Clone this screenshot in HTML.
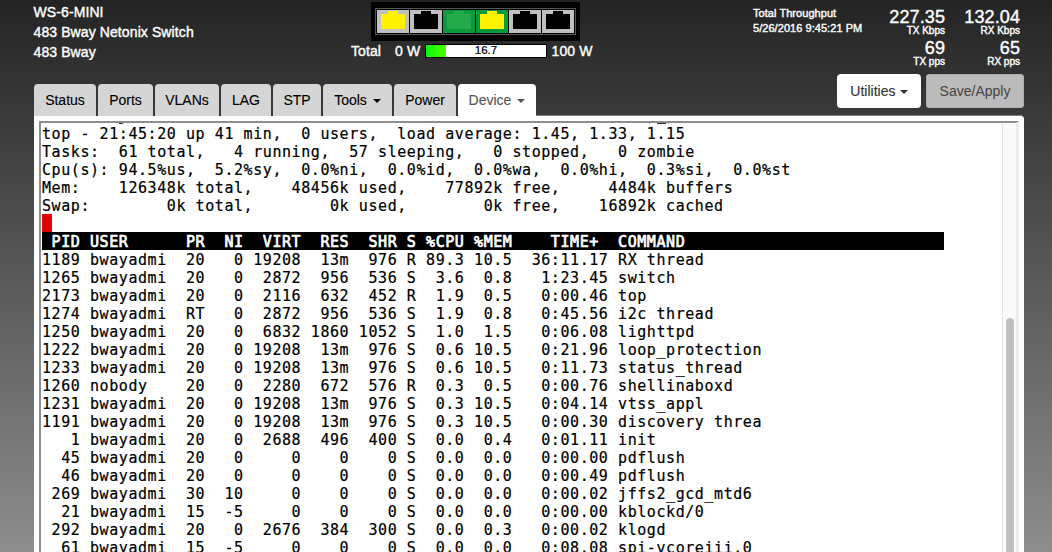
<!DOCTYPE html>
<html><head><meta charset="utf-8"><title>WS-6-MINI</title>
<style>
*{box-sizing:border-box}
html,body{margin:0;padding:0}
body{width:1052px;height:552px;overflow:hidden;position:relative;
 font-family:"Liberation Sans",Arial,Helvetica,sans-serif;font-size:14px;line-height:20px;color:#fff;
 background:linear-gradient(to bottom,#242424 0px,#8d8d8d 552px);}
.abs{position:absolute;white-space:nowrap}
.w{color:#fff;-webkit-text-stroke:0.4px #fff;letter-spacing:0.1px}
#info{left:33.5px;top:2px}
#portbox{left:371px;top:2px;width:209px;height:39px;background:#000}
#portinner{position:absolute;left:4px;top:6px;width:201px;height:27px;border:1px solid #555}
#portinner svg{position:absolute;left:1px;top:1px}
#pbar{left:425px;top:44px;width:122px;height:14px;background:#fff;border:1px solid #000;}
#pfill{position:absolute;left:0;top:0;height:12px;width:20px;background:linear-gradient(to right,#06f906,#4eff00)}
#ptext{position:absolute;left:0;top:-2px;width:120px;text-align:center;font-size:11.6px;line-height:13px;color:#000;-webkit-text-stroke:0.2px #000}
.sm{font-size:11px;line-height:15px;letter-spacing:0.05px}
.num{font-size:18px;line-height:20px;text-align:right}
.lab{font-size:10px;line-height:11px;text-align:right;letter-spacing:0}
.tab{position:absolute;top:84px;height:32px;background:#d5d5d5;border-radius:4px 4px 0 0;color:#000;-webkit-text-stroke:0.12px;
  text-align:center;line-height:32px;font-size:14px;white-space:nowrap}
.tab.act{background:#fff;color:#555;height:33px}
.caret{display:inline-block;width:0;height:0;margin-left:6px;vertical-align:middle;position:relative;top:0px;border-top:4px solid;border-right:4px solid transparent;border-left:4px solid transparent}
.btn{position:absolute;top:74px;height:34px;border-radius:4px;font-size:14px;line-height:35px;text-align:center;white-space:nowrap}
#panel{left:34px;top:116px;width:990px;height:460px;background:#fff;border-radius:0 3px 0 0}
#pline{left:536px;top:115px;width:486px;height:1px;background:rgba(255,255,255,0.35)}
#term{position:absolute;left:5px;top:5px;width:980px;height:460px;border:2px solid;border-right-width:3px;border-color:#8e8e8e #ececec #ececec #8e8e8e;background:#fff;overflow:hidden}
#tx{position:absolute;left:1px;top:1px;color:#000;font-family:"DejaVu Sans Mono","Liberation Mono",monospace;font-size:15px;letter-spacing:0.57px;line-height:18px;-webkit-text-stroke:0.2px #000}
.r{height:18px;white-space:pre;padding-top:1px}
.r.h{background:#000;color:#fff;-webkit-text-stroke:0.7px #fff;width:902.4px;overflow:hidden}
.cur{display:inline-block;background:#e00000;height:18px;vertical-align:top;margin-top:-1px}
i.m{position:absolute;top:0;height:1px;background:#333}
#sb{position:absolute;right:0;top:0;width:14px;height:100%;background:#fafafa;border-left:1px solid #e4e4e4}
#thumb{position:absolute;left:3px;top:195px;width:8px;height:300px;border-radius:4px;background:#c1c1c1}
</style></head><body>
<div id="info" class="abs w">WS-6-MINI<br>483 Bway Netonix Switch<br>483 Bway</div>

<div id="portbox" class="abs"><div id="portinner"><svg width="198" height="23" viewBox="0 0 198 23"><g transform="translate(0,0)"><rect width="32" height="23" fill="#c0c0c0"/><path d="M4 4h7v-3h10v3h7v15h-24z" fill="#fff200"/></g><g transform="translate(33,0)"><rect width="32" height="23" fill="#c0c0c0"/><path d="M4 4h7v-3h10v3h7v15h-24z" fill="#000"/></g><g transform="translate(66,0)"><rect width="32" height="23" fill="#0a9a3c"/><path d="M4 4h7v-3h10v3h7v15h-24z" fill="#23ab4b"/></g><g transform="translate(99,0)"><rect width="32" height="23" fill="#0a9a3c"/><path d="M4 4h7v-3h10v3h7v15h-24z" fill="#fff200"/></g><g transform="translate(132,0)"><rect width="32" height="23" fill="#c0c0c0"/><path d="M4 4h7v-3h10v3h7v15h-24z" fill="#000"/></g><g transform="translate(165,0)"><rect width="32" height="23" fill="#c0c0c0"/><path d="M4 4h7v-3h10v3h7v15h-24z" fill="#000"/></g></svg></div></div>
<div class="abs w" style="left:351px;top:41px">Total</div>
<div class="abs w" style="left:395px;top:41px">0 W</div>
<div id="pbar" class="abs"><div id="pfill"></div><div id="ptext">16.7</div></div>
<div class="abs w" style="left:551.5px;top:41px">100 W</div>

<div class="abs w sm" style="left:753px;top:6px">Total Throughput<br>5/26/2016 9:45:21 PM</div>
<div class="abs w num" style="right:107px;top:7px">227.35</div>
<div class="abs w lab" style="right:107px;top:25px">TX Kbps</div>
<div class="abs w num" style="right:107px;top:38px">69</div>
<div class="abs w lab" style="right:107px;top:56px">TX pps</div>
<div class="abs w num" style="right:32px;top:7px">132.04</div>
<div class="abs w lab" style="right:32px;top:25px">RX Kbps</div>
<div class="abs w num" style="right:32px;top:38px">65</div>
<div class="abs w lab" style="right:32px;top:56px">RX pps</div>

<div class="tab" style="left:34px;width:62px">Status</div>
<div class="tab" style="left:98px;width:55px">Ports</div>
<div class="tab" style="left:155px;width:64px">VLANs</div>
<div class="tab" style="left:221px;width:50px">LAG</div>
<div class="tab" style="left:273px;width:48px">STP</div>
<div class="tab" style="left:323px;width:69px">Tools<span class="caret"></span></div>
<div class="tab" style="left:394px;width:62px">Power</div>
<div class="tab act" style="left:458px;width:78px">Device<span class="caret"></span></div>

<div class="btn" style="left:837px;width:84px;background:#fff;color:#333;text-align:left;padding-left:13.3px;-webkit-text-stroke:0.15px">Utilities<span class="caret" style="margin-left:5px"></span></div>
<div class="btn" style="left:926px;width:98px;background:#bbb;color:#444;box-shadow:inset 0 0 0 1px #b0b0b0">Save/Apply</div>

<div id="pline" class="abs"></div>
<div id="panel" class="abs"><div id="term"><div id="tx">
<div class="r">top - 21:45:20 up 41 min,  0 users,  load average: 1.45, 1.33, 1.15</div>
<div class="r">Tasks:  61 total,   4 running,  57 sleeping,   0 stopped,   0 zombie</div>
<div class="r">Cpu(s): 94.5%us,  5.2%sy,  0.0%ni,  0.0%id,  0.0%wa,  0.0%hi,  0.3%si,  0.0%st</div>
<div class="r">Mem:    126348k total,    48456k used,    77892k free,     4484k buffers</div>
<div class="r">Swap:        0k total,        0k used,        0k free,    16892k cached</div>
<div class="r"><span class="cur"> </span></div>
<div class="r h"> PID USER      PR  NI  VIRT  RES  SHR S %CPU %MEM    TIME+  COMMAND                           </div>
<div class="r">1189 bwayadmi  20   0 19208  13m  976 R 89.3 10.5  36:11.17 RX thread</div>
<div class="r">1265 bwayadmi  20   0  2872  956  536 S  3.6  0.8   1:23.45 switch</div>
<div class="r">2173 bwayadmi  20   0  2116  632  452 R  1.9  0.5   0:00.46 top</div>
<div class="r">1274 bwayadmi  RT   0  2872  956  536 S  1.9  0.8   0:45.56 i2c thread</div>
<div class="r">1250 bwayadmi  20   0  6832 1860 1052 S  1.0  1.5   0:06.08 lighttpd</div>
<div class="r">1222 bwayadmi  20   0 19208  13m  976 S  0.6 10.5   0:21.96 loop_protection</div>
<div class="r">1233 bwayadmi  20   0 19208  13m  976 S  0.6 10.5   0:11.73 status_thread</div>
<div class="r">1260 nobody    20   0  2280  672  576 R  0.3  0.5   0:00.76 shellinaboxd</div>
<div class="r">1231 bwayadmi  20   0 19208  13m  976 S  0.3 10.5   0:04.14 vtss_appl</div>
<div class="r">1191 bwayadmi  20   0 19208  13m  976 S  0.3 10.5   0:00.30 discovery threa</div>
<div class="r">   1 bwayadmi  20   0  2688  496  400 S  0.0  0.4   0:01.11 init</div>
<div class="r">  45 bwayadmi  20   0     0    0    0 S  0.0  0.0   0:00.00 pdflush</div>
<div class="r">  46 bwayadmi  20   0     0    0    0 S  0.0  0.0   0:00.49 pdflush</div>
<div class="r"> 269 bwayadmi  30  10     0    0    0 S  0.0  0.0   0:00.02 jffs2_gcd_mtd6</div>
<div class="r">  21 bwayadmi  15  -5     0    0    0 S  0.0  0.0   0:00.00 kblockd/0</div>
<div class="r"> 292 bwayadmi  20   0  2676  384  300 S  0.0  0.3   0:00.02 klogd</div>
<div class="r">  61 bwayadmi  15  -5     0    0    0 S  0.0  0.0   0:08.08 spi-vcoreiii.0</div>
</div><i class="m" style="left:78px;width:4px"></i><i class="m" style="left:608px;width:1px;background:#999"></i><i class="m" style="left:616px;width:9px"></i><i class="m" style="left:627px;width:1px;background:#999"></i><div id="sb"><div id="thumb"></div></div></div></div>
</body></html>
